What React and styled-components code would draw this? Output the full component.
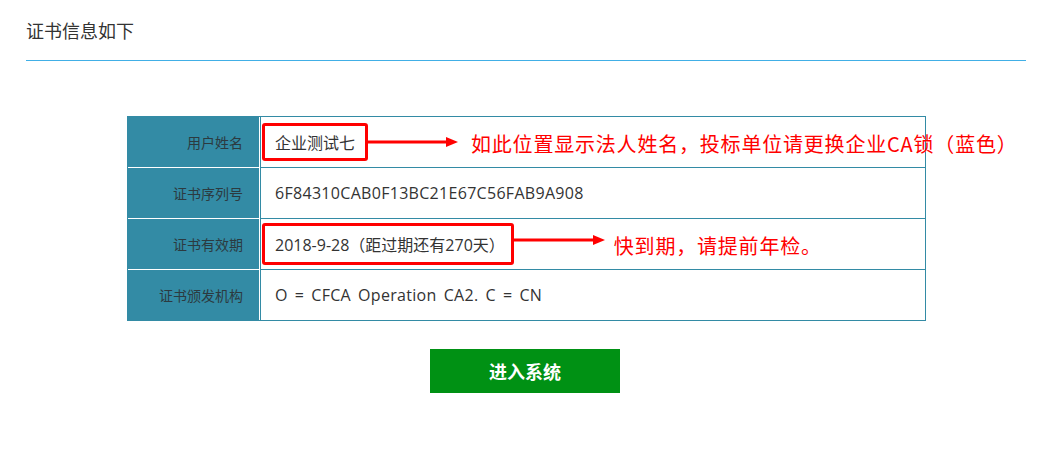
import React from 'react';
import styled, { createGlobalStyle } from 'styled-components';

const GlobalStyle = createGlobalStyle`
  body {
    margin: 0;
    background: #fff;
    font-family: "Open Sans", "Noto Sans CJK SC", sans-serif;
    color: #333;
  }
`;

const Page = styled.div`
  width: 1000px;
  margin: 0 26px;
`;

const Header = styled.div`
  height: 60px;
  display: flex;
  align-items: center;
  border-bottom: 1px solid #41afe6;
  font-family: "Noto Sans CJK SC", sans-serif;
  font-size: 18px;
  color: #333;
`;

const Table = styled.div`
  box-sizing: border-box;
  width: 799px;
  margin: 55px 0 0 101px;
  border: 1px solid #338ba5;
`;

const Row = styled.div`
  display: flex;
  height: ${p => (p.first ? 50 : 51)}px;
`;

const Label = styled.div`
  width: 132px;
  flex: none;
  box-sizing: border-box;
  padding-right: 16px;
  background: #338ba5;
  border-right: 1px solid #fff;
  border-top: ${p => (p.first ? 'none' : '1px solid #fff')};
  display: flex;
  align-items: center;
  justify-content: flex-end;
  font-family: "Noto Sans CJK SC", sans-serif;
  font-size: 14px;
  color: #2c3a40;
`;

const Value = styled.div`
  flex: 1;
  box-sizing: border-box;
  border-left: 1px solid #338ba5;
  border-top: ${p => (p.first ? 'none' : '1px solid #338ba5')};
  padding-left: ${p => (p.marked ? 1 : 14)}px;
  display: flex;
  align-items: center;
  font-family: "Open Sans", "Noto Sans CJK SC", sans-serif;
  font-size: 16px;
  letter-spacing: ${p => p.ls || 0}px;
  word-spacing: ${p => p.ws || 0}px;
  color: #333;
  white-space: pre;
`;

const Mark = styled.span`
  display: inline-flex;
  align-items: center;
  height: ${p => p.h}px;
  box-sizing: border-box;
  padding: 0 ${p => p.pr}px 0 10px;
  border: 3px solid #ff0000;
  border-radius: 3px;
`;

const Note = styled.span`
  margin-left: ${p => p.gap}px;
  font-family: "Noto Sans CJK SC", sans-serif;
  font-size: 20px;
  letter-spacing: ${p => p.ls}px;
  color: #ff0000;
  position: relative;
  top: ${p => p.dy}px;
`;

const Enter = styled.button`
  display: block;
  width: 190px;
  height: 44px;
  margin: 28px 0 0 404px;
  border: none;
  background: #009114;
  color: #fff;
  font-family: "Noto Sans CJK SC", sans-serif;
  font-size: 18px;
  font-weight: bold;
  cursor: pointer;
`;

const Arrow = ({ len, dy = 0 }) => (
  <svg width={len} height="14" viewBox={`0 0 ${len} 14`} style={{ position: 'relative', top: dy }}>
    <rect x="0" y="5.5" width={len - 10} height="3" fill="#ff0000" />
    <polygon points={`${len - 12},2 ${len},7 ${len - 12},12`} fill="#ff0000" />
  </svg>
);

const rows = [
  {
    label: '用户姓名',
    value: '企业测试七',
    mark: { h: 38, pr: 10 },
    arrow: { len: 90, dy: 0 },
    note: { text: '如此位置显示法人姓名，投标单位请更换企业CA锁（蓝色）', gap: 13, dy: 1, ls: 0.8 },
  },
  { label: '证书序列号', value: '6F84310CAB0F13BC21E67C56FAB9A908', ls: 0.3 },
  {
    label: '证书有效期',
    value: '2018-9-28（距过期还有270天）',
    mark: { h: 42, pr: 6 },
    arrow: { len: 91, dy: -4 },
    note: { text: '快到期，请提前年检。', gap: 9, dy: 1, ls: 0.8 },
  },
  { label: '证书颁发机构', value: 'O = CFCA Operation CA2. C = CN', ls: 0.3, ws: 2.6 },
];

export default function App() {
  return (
    <>
      <GlobalStyle />
      <Page>
        <Header>证书信息如下</Header>
        <Table>
          {rows.map((r, i) => (
            <Row key={r.label} first={i === 0}>
              <Label first={i === 0}>{r.label}</Label>
              <Value first={i === 0} marked={!!r.mark} ls={r.ls} ws={r.ws}>
                {r.mark ? (
                  <>
                    <Mark h={r.mark.h} pr={r.mark.pr}>{r.value}</Mark>
                    <Arrow len={r.arrow.len} dy={r.arrow.dy} />
                    <Note gap={r.note.gap} dy={r.note.dy} ls={r.note.ls}>{r.note.text}</Note>
                  </>
                ) : (
                  r.value
                )}
              </Value>
            </Row>
          ))}
        </Table>
        <Enter>进入系统</Enter>
      </Page>
    </>
  );
}
